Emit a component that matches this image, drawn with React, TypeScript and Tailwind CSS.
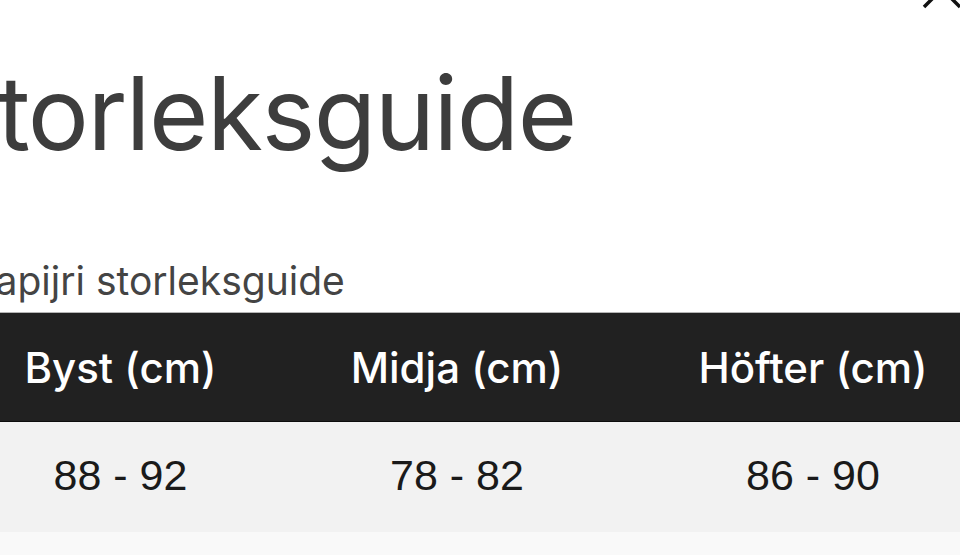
const rows = [["88 - 92", "78 - 82", "86 - 90"]];
const cols = ["Byst (cm)", "Midja (cm)", "Höfter (cm)"];
const widths = ["w-[241px]", "w-[432px]", "w-[280px]"];

function CloseIcon() {
  return (
    <svg viewBox="0 0 44 44" className="h-[44px] w-[44px]" fill="none" stroke="#111" strokeWidth={3.5}>
      <path d="M4 40 L40 4 M4 4 L40 40" />
    </svg>
  );
}

export default function App() {
  return (
    <div className="relative flex h-[555px] w-[960px] flex-col overflow-hidden bg-[#f9f9f9] font-['Inter',sans-serif]">
      <button className="absolute right-[-4px] top-[-33px]" aria-label="Stäng">
        <CloseIcon />
      </button>
      <div className="bg-white pt-[62px]">
        <h1 className="-ml-[67px] whitespace-nowrap text-[102px] font-normal leading-none tracking-[-0.015em] text-[#3d3d3d]">
          Storleksguide
        </h1>
        <p className="-ml-[80px] mt-[97px] whitespace-nowrap pb-[12px] text-[39px] leading-none text-[#444]">
          Napapijri storleksguide
        </p>
      </div>
      <div className="border-t border-[#b5b5b5]">
        <div className="flex h-[109px] items-center border-b border-[#0d0d0d] bg-[#212121] text-white">
          {cols.map((c, i) => (
            <div key={c} className={`${widths[i]} text-center text-[42px] font-medium`}>
              {c}
            </div>
          ))}
        </div>
        {rows.map((r) => (
          <div key={r[0]} className="flex h-[110px] items-center bg-[#f2f2f2] pb-[4px] font-['Liberation_Sans',sans-serif] text-[43px] text-[#1a1a1a]">
            {r.map((v, i) => (
              <div key={i} className={`${widths[i]} text-center`}>
                {v}
              </div>
            ))}
          </div>
        ))}
      </div>
    </div>
  );
}
